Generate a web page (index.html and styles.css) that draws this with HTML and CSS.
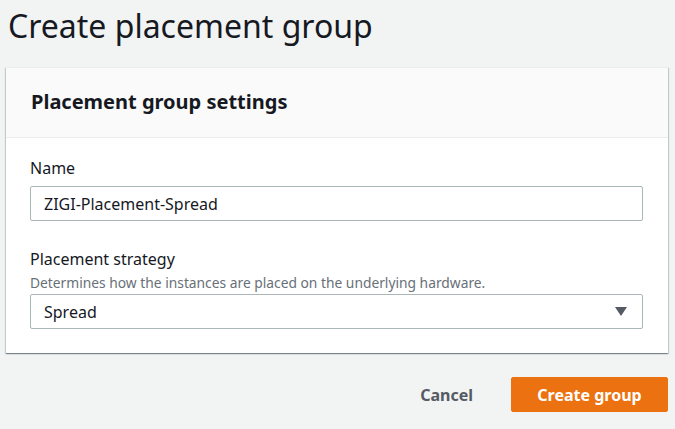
FILE: index.html
```html
<!DOCTYPE html>
<html>
<head>
<meta charset="utf-8">
<link rel="stylesheet" href="styles.css">
</head>
<body>
<div class="page">
  <h1 class="title">Create placement group</h1>
  <div class="card">
    <div class="card-header">
      <h2 class="card-title">Placement group settings</h2>
    </div>
    <div class="card-body">
      <div class="field">
        <label class="label">Name</label>
        <div class="input">ZIGI-Placement-Spread</div>
      </div>
      <div class="field">
        <label class="label">Placement strategy</label>
        <div class="desc">Determines how the instances are placed on the underlying hardware.</div>
        <div class="input select">
          <span>Spread</span>
          <svg class="caret" width="12" height="9" viewBox="0 0 12 9"><path d="M0 0 H12 L6 9 Z" fill="#545b64"/></svg>
        </div>
      </div>
    </div>
  </div>
  <div class="actions">
    <button class="btn-link">Cancel</button>
    <button class="btn-primary">Create group</button>
  </div>
</div>
</body>
</html>
```
FILE: styles.css
```css
html, body {
  margin: 0;
  padding: 0;
  background: #f2f3f3;
  font-family: "Noto Sans", "Open Sans", sans-serif;
  color: #16191f;
}
.page {
  padding: 0 7px 0 6px;
}
.title {
  margin: 0;
  padding: 4px 0 0 2px;
  font-size: 32px;
  font-weight: 400;
  line-height: 44px;
  height: 63px;
  color: #16191f;
}
.card {
  background: #fff;
  box-shadow: 0 1px 1px 0 rgba(0,28,36,0.3), 1px 1px 1px 0 rgba(0,28,36,0.15), -1px 1px 1px 0 rgba(0,28,36,0.15);
  border-top: 1px solid #eaeded;
}
.card-header {
  background: #fafafa;
  border-bottom: 1px solid #eaeded;
  height: 69px;
  padding: 0 25px;
  display: flex;
  align-items: center;
}
.card-title {
  margin: 0;
  font-size: 20px;
  font-weight: 700;
  line-height: 26px;
  margin-top: -2px;
}
.card-body {
  padding: 19px 25px 24px 24px;
}
.field + .field {
  margin-top: 27px;
}
.label {
  display: block;
  font-size: 16px;
  line-height: 22px;
  margin-bottom: 7px;
}
.desc {
  font-size: 13.8px;
  line-height: 18px;
  color: #687078;
  margin-top: -3px;
  margin-bottom: 2px;
}
.input {
  height: 33px;
  border: 1px solid #aab7b8;
  border-radius: 2px;
  box-sizing: content-box;
  padding: 0 13px;
  display: flex;
  align-items: center;
  font-size: 16px;
  color: #16191f;
}
.select {
  justify-content: space-between;
}
.caret {
  margin-right: 2px;
}
.actions {
  display: flex;
  justify-content: flex-end;
  align-items: center;
  gap: 18px;
  padding-top: 24px;
}
.btn-link {
  background: none;
  border: none;
  font-family: inherit;
  font-size: 16px;
  font-weight: 700;
  color: #545b64;
  padding: 0 20px;
  height: 35px;
}
.btn-primary {
  background: #ec7211;
  border: 1px solid #ec7211;
  border-radius: 2px;
  color: #fff;
  font-family: inherit;
  font-size: 16px;
  font-weight: 700;
  height: 35px;
  width: 157px;
  padding: 0;
}
```
